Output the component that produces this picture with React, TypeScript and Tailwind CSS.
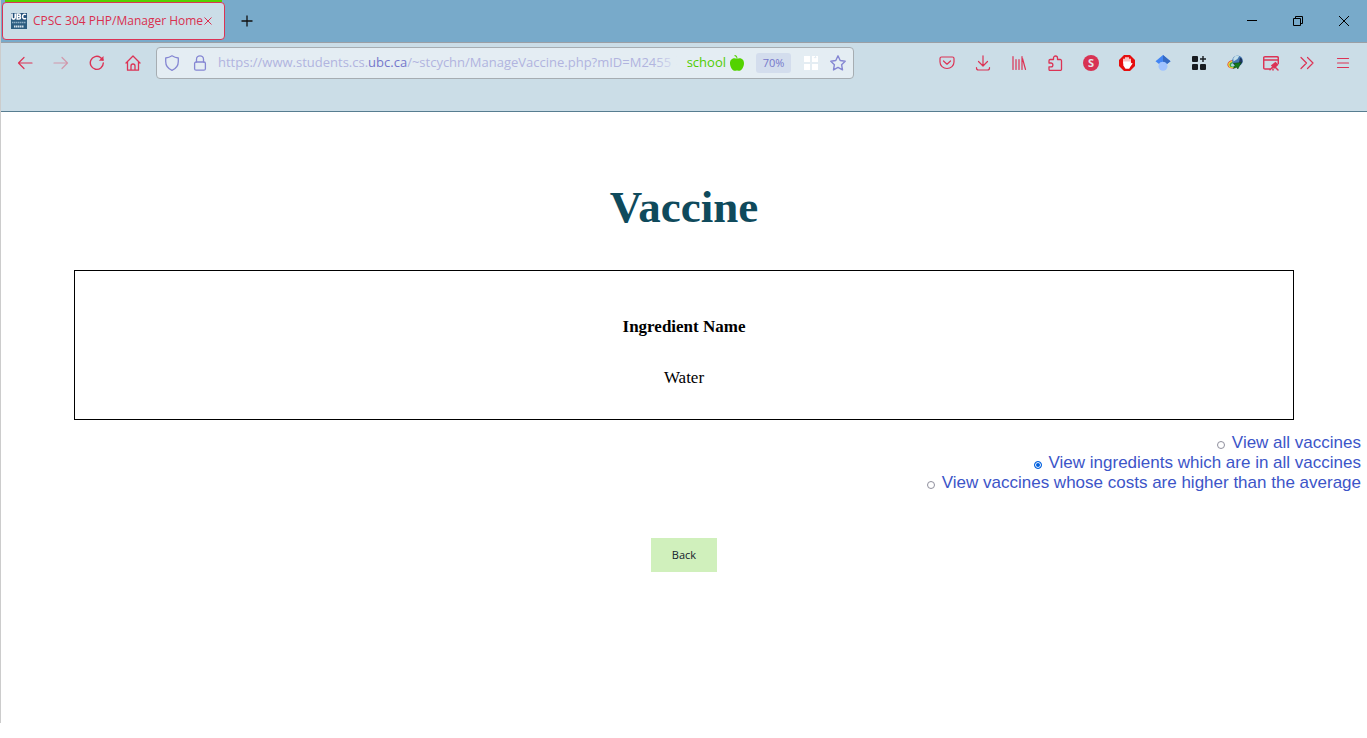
import { useState } from "react";
import type { ReactNode } from "react";

const options = [
  "View all vaccines",
  "View ingredients which are in all vaccines",
  "View vaccines whose costs are higher than the average",
];

function ToolButton({ label, children, className = "" }: { label: string; children: ReactNode; className?: string }) {
  return (
    <button type="button" aria-label={label} className={`flex h-8 w-9 shrink-0 items-center justify-center ${className}`}>
      {children}
    </button>
  );
}

function Icon({ children, width = "1.2" }: { children: ReactNode; width?: string }) {
  return (
    <svg viewBox="0 0 16 16" className="size-4" fill="none" stroke="currentColor" strokeWidth={width} strokeLinecap="round" strokeLinejoin="round" aria-hidden="true">
      {children}
    </svg>
  );
}

function TitleBar() {
  return (
    <header className="flex h-[43px] items-start border-b border-[#9b9fa5] bg-[#78aaca]">
      <div className="ml-px w-[223px]">
        <div className="mx-[3px] h-0.5 bg-[#53d200]" />
        <div className="flex h-[38px] items-center rounded-[4px] border border-[#dc3355] bg-[#cbdde7] pl-2 text-[#d9304f]">
          <svg viewBox="0 0 16 16" className="size-4" aria-hidden="true">
            <rect width="16" height="16" fill="#2c5d80" />
            <rect width="16" height="7" fill="#24507a" />
            <path d="M1 .5v4a1.500 1.500 0 0 0 3.200 0v-4M6.200 1v5h2a1.200 1.200 0 0 0 0-2.500H6.400h1.700a1.200 1.200 0 0 0 0-2.500zM15 1.800a2 2 0 0 0-3.400 1.400v.8A2 2 0 0 0 15 5.200" fill="none" stroke="#fff" strokeWidth="1.600" />
            <path d="M1 9.500h14" stroke="#8fb0c6" strokeWidth="1.600" strokeDasharray="1.500 .5" />
            <path d="M3 13.500h10" stroke="#d5e2ea" strokeWidth="1.800" strokeDasharray="1.500 .5" />
          </svg>
          <span className="ml-[6px] whitespace-nowrap text-[12px]">CPSC 304 PHP/Manager Home</span>
          <button type="button" aria-label="Close tab" className="ml-auto mr-3">
            <svg viewBox="0 0 8 8" className="size-2" stroke="currentColor" aria-hidden="true"><path d="M.5.5l7 7M7.500.5l-7 7" /></svg>
          </button>
        </div>
      </div>
      <button type="button" aria-label="New tab" className="flex h-[42px] w-[43px] items-center justify-center">
        <svg viewBox="0 0 12 12" className="size-3" stroke="#111" strokeWidth="1.300" aria-hidden="true"><path d="M6 .5v11M.5 6h11" /></svg>
      </button>
      <div className="ml-auto flex h-[42px] text-black">
        <button type="button" aria-label="Minimize" className="flex w-[46px] items-center justify-center">
          <svg viewBox="0 0 10 10" className="size-[10px]" fill="currentColor" aria-hidden="true"><path d="M0 4h10v1H0z" /></svg>
        </button>
        <button type="button" aria-label="Restore" className="flex w-[46px] items-center justify-center">
          <svg viewBox="0 0 10 10" className="size-[10px]" fill="none" stroke="currentColor" aria-hidden="true"><path d="M.5 2.500h7v7h-7zM2.500 2.500v-2h7v7h-2" /></svg>
        </button>
        <button type="button" aria-label="Close window" className="flex w-[46px] items-center justify-center">
          <svg viewBox="0 0 10 10" className="size-[10px]" stroke="currentColor" aria-hidden="true"><path d="M0 0l10 10M10 0L0 10" /></svg>
        </button>
      </div>
    </header>
  );
}

function AddressBar() {
  return (
    <div className="ml-[5px] flex h-8 w-[698px] shrink items-center overflow-hidden rounded-[4px] border border-[#a6adb2] bg-[#e4edf3] text-[#8587d3]">
      <button type="button" aria-label="Tracking protection" className="ml-[7px]">
        <Icon width="1.300"><path d="M8 .8c2 1.300 4 2 6.300 2.200v3.500c0 4.200-2.600 7.300-6.300 8.800C4.300 13.800 1.700 10.700 1.700 6.500V3C4 2.800 6 2.100 8 .8z" /></Icon>
      </button>
      <button type="button" aria-label="Connection secure" className="ml-3">
        <Icon width="1.300"><rect x="2.600" y="7" width="10.800" height="8.200" rx="1.500" /><path d="M4.500 7V4.300a3.500 3.500 0 0 1 7 0V7" /></Icon>
      </button>
      <div className="relative ml-[10px] min-w-0 flex-1 overflow-hidden whitespace-nowrap text-[13px] text-[#b1b4df]">
        https://www.students.cs.<span className="text-[#7678cb]">ubc.ca</span>/~stcychn/ManageVaccine.php?mID=M2455
        <div className="absolute inset-y-0 right-0 w-7 bg-linear-to-r from-transparent to-[#e4edf3]" />
      </div>
      <span className="ml-[6px] text-[13px] text-[#50cc00]">school</span>
      <svg viewBox="0 0 16 16" className="ml-[3px] size-4" fill="#53d200" aria-hidden="true">
        <path d="M8 4C5.500 2.500 1 3.500 1 8.200 1 12 3.500 15.800 6 15.800c1 0 1.300-.4 2-.4s1 .4 2 .4c2.500 0 5-3.800 5-7.600C15 3.500 10.500 2.500 8 4z" />
        <path d="M5.500 0C7.500 0 8.500 1.500 8.500 4H7.600C7.600 2.200 7 1.500 5.500 1z" />
      </svg>
      <button type="button" className="ml-[11px] h-5 w-[35px] rounded-[3px] bg-[#d3dded] text-[11px] text-[#7678cb]">70%</button>
      <svg viewBox="0 0 14 14" className="ml-[13px] size-[14px]" fill="#fff" aria-hidden="true">
        <path d="M0 0h6v6H0zM0 8h6v6H0zM8 8h6v6H8zM8 0h3v1H9.500l1.500 1.500L13 1h-1V0h2v6H8z" />
      </svg>
      <button type="button" aria-label="Bookmark this page" className="ml-3 mr-[7px]">
        <Icon width="1.400"><path d="M8 .8l2.200 4.700 5 .7-3.600 3.500.9 5.200L8 12.400l-4.500 2.500.9-5.200L.8 6.200l5-.7z" /></Icon>
      </button>
    </div>
  );
}

function Toolbar() {
  return (
    <nav aria-label="Browser toolbar" className="flex h-[69px] items-start border-b border-[#577d90] bg-[#cbdde7] pl-[6px] pt-1 text-[#dc3355]">
      <ToolButton label="Back to previous page"><Icon><path d="M15 8H1.500M7 2.500L1.500 8 7 13.500" /></Icon></ToolButton>
      <ToolButton label="Forward" className="opacity-40"><Icon><path d="M1 8h13.500M9 2.500L14.500 8 9 13.500" /></Icon></ToolButton>
      <ToolButton label="Reload"><Icon width="1.400"><path d="M14.300 8A6.500 6.500 0 1 1 11.500 2.500L14 5" /><path d="M14.500 1v4.700H9.800z" fill="currentColor" stroke="none" /></Icon></ToolButton>
      <ToolButton label="Home"><Icon width="1.300"><path d="M1 8l7-7 7 7M2.500 6.500v8.700h11V6.500M6 15v-4a2 2 0 0 1 4 0v4" /></Icon></ToolButton>
      <AddressBar />
      <div className="ml-auto flex pr-[6px]">
        <ToolButton label="Save to Pocket"><Icon><path d="M2.500 2h11A1.500 1.500 0 0 1 15 3.500V7A7 6.500 0 0 1 1 7V3.500A1.500 1.500 0 0 1 2.500 2zM4.500 6L8 9.200 11.500 6" /></Icon></ToolButton>
        <ToolButton label="Downloads"><Icon><path d="M8 .8v9.700M3.500 6.500L8 11l4.500-4.500M1.500 12.500V13a2 2 0 0 0 2 2h9a2 2 0 0 0 2-2v-.5" /></Icon></ToolButton>
        <ToolButton label="Library"><Icon><path d="M2 1.500v13M5 4.500v10M8 4.500v10M11 1.500v13M11.500 3.500l3 11" /></Icon></ToolButton>
        <ToolButton label="Extensions"><Icon width="1.300"><path d="M6.500 4.500V3a2 2 0 0 1 4 0v1.500h2.700A1.300 1.300 0 0 1 14.500 5.800v8.400a1.300 1.300 0 0 1-1.300 1.300H3.300A1.300 1.300 0 0 1 2 14.200V11.800h2a1.900 1.900 0 0 0 0-3.800H2V5.800a1.300 1.300 0 0 1 1.300-1.300z" /></Icon></ToolButton>
        <ToolButton label="Account">
          <span className="flex size-4 items-center justify-center rounded-full bg-[#d83253] text-[11px] font-bold leading-4 text-[#e4e6ec]">S</span>
        </ToolButton>
        <ToolButton label="Ad blocker">
          <svg viewBox="0 0 16 16" className="size-4" aria-hidden="true">
            <path d="M5 0h6l5 5v6l-5 5H5l-5-5V5z" fill="#e60d0d" />
            <path d="M5 8V4.200M7 7V2.800M9 7V2.800M11 8V4.200" stroke="#fff" strokeWidth="1.500" strokeLinecap="round" />
            <path d="M4.300 6.500h7.400v2.200l1-.9.900.8-2.400 3.400-1 1.800H6.500L4.300 10.500z" fill="#fff" />
          </svg>
        </ToolButton>
        <ToolButton label="Scholar">
          <svg viewBox="0 0 16 16" className="size-4" aria-hidden="true">
            <circle cx="8" cy="11.300" r="4.500" fill="#a0c3ff" />
            <path d="M8 0L.5 6.200 4 9c1.500-3 6.500-3 8 0l3.500-2.800z" fill="#4285f4" />
            <path d="M8 0l7.500 6.200L12 9C11 7 9.500 6.700 8 6.700z" fill="#356ac3" />
          </svg>
        </ToolButton>
        <ToolButton label="Tab groups">
          <svg viewBox="0 0 14 14" className="size-[14px]" fill="#171b20" aria-hidden="true">
            <rect width="6" height="6" rx="1" /><rect y="8" width="6" height="6" rx="1" /><rect x="8" y="8" width="6" height="6" rx="1" />
            <path d="M10.300 0h1.400v2.300H14v1.400h-2.300V6h-1.400V3.700H8V2.300h2.300z" />
          </svg>
        </ToolButton>
        <ToolButton label="Download manager">
          <svg viewBox="0 0 16 16" className="size-4" aria-hidden="true">
            <ellipse cx="5.500" cy="9.200" rx="5.200" ry="4.200" transform="rotate(-15 5.500 9.200)" fill="#e0563a" />
            <ellipse cx="5.700" cy="9.400" rx="4.500" ry="3.500" transform="rotate(-15 5.700 9.400)" fill="#f4dc3a" />
            <ellipse cx="6" cy="9.600" rx="3.500" ry="2.600" transform="rotate(-15 6 9.600)" fill="#45a545" />
            <ellipse cx="6.200" cy="9.800" rx="2.300" ry="1.500" transform="rotate(-15 6.200 9.800)" fill="#a9d5df" />
            <circle cx="10.500" cy="5.800" r="5.300" fill="#4478b4" />
            <path d="M6.200 3.500a5 5 0 0 1 6-2.600L10.500 4 6.500 6.500z" fill="#c3dfea" />
            <path d="M13 2.500l2 1.500.5 3-2.500 3-1-3z" fill="#1e355e" />
            <path d="M6.500 8.300l7.800-.8-3.500 6.500-1-1.800-3.500 1.300 1.800-3.200z" fill="#147a1c" stroke="#0c3913" strokeWidth=".5" />
          </svg>
        </ToolButton>
        <ToolButton label="Page eraser">
          <Icon width="1.500"><path d="M7 14H2a1.300 1.300 0 0 1-1.300-1.300V3A1.300 1.300 0 0 1 2 1.700h12A1.300 1.300 0 0 1 15.300 3v5.500M1 5h14" /><path d="M12.500 6.800l3 3-4.200 3.900L7.800 10.500z" fill="currentColor" stroke="none" /><path d="M7 14.800l2.500-2.500M12.500 12.500l2.500 2.500M10 14v1" /></Icon>
        </ToolButton>
        <ToolButton label="More tools"><Icon><path d="M2 2.500L7.500 8 2 13.500M8.500 2.500L14 8l-5.500 5.500" /></Icon></ToolButton>
        <ToolButton label="Application menu"><Icon><path d="M2.500 3.500h11M2.500 8h11M2.500 12.500h11" /></Icon></ToolButton>
      </div>
    </nav>
  );
}

export default function App() {
  const [selected, setSelected] = useState(1);
  return (
    <div className="min-h-screen bg-white pb-[15px] font-['Open_Sans','Noto_Sans',sans-serif]">
      <div className="flex min-h-[calc(100vh-15px)] flex-col border-l border-[#cccccc]">
        <TitleBar />
        <Toolbar />
        <main className="flex flex-col items-center pt-[69px]">
          <h1 className="font-['Liberation_Serif',serif] text-[45px] font-bold leading-[52px] text-[#0f4a5c]">Vaccine</h1>
          <div className="mt-[37px] w-full px-[73px]">
            <table className="w-full border border-black font-['Liberation_Serif',serif] text-[17px] leading-5 text-black">
              <thead>
                <tr><th scope="col" className="pb-4 pt-[46px] text-center font-bold">Ingredient Name</th></tr>
              </thead>
              <tbody>
                <tr><td className="pb-[31px] pt-[15px] text-center">Water</td></tr>
              </tbody>
            </table>
          </div>
          <form className="mt-[13px] flex w-full flex-col items-end pr-[6px] font-['Liberation_Sans',sans-serif] text-[17px] leading-5 text-[#3c55c8]">
            {options.map((option, index) => (
              <label key={option} className="flex items-center gap-[7px]">
                <input
                  type="radio"
                  name="view"
                  checked={selected === index}
                  onChange={() => setSelected(index)}
                  className="mt-1 size-2 appearance-none rounded-full border border-[#8f8f9d] bg-white checked:border-[#0060df] checked:bg-[#0060df] checked:shadow-[inset_0_0_0_1px_white]"
                />
                <span>{option}</span>
              </label>
            ))}
          </form>
          <button type="button" className="mt-[45px] h-[34px] w-[66px] bg-[#d0f0bc] text-[11px] text-[#15202b]">Back</button>
        </main>
      </div>
    </div>
  );
}
